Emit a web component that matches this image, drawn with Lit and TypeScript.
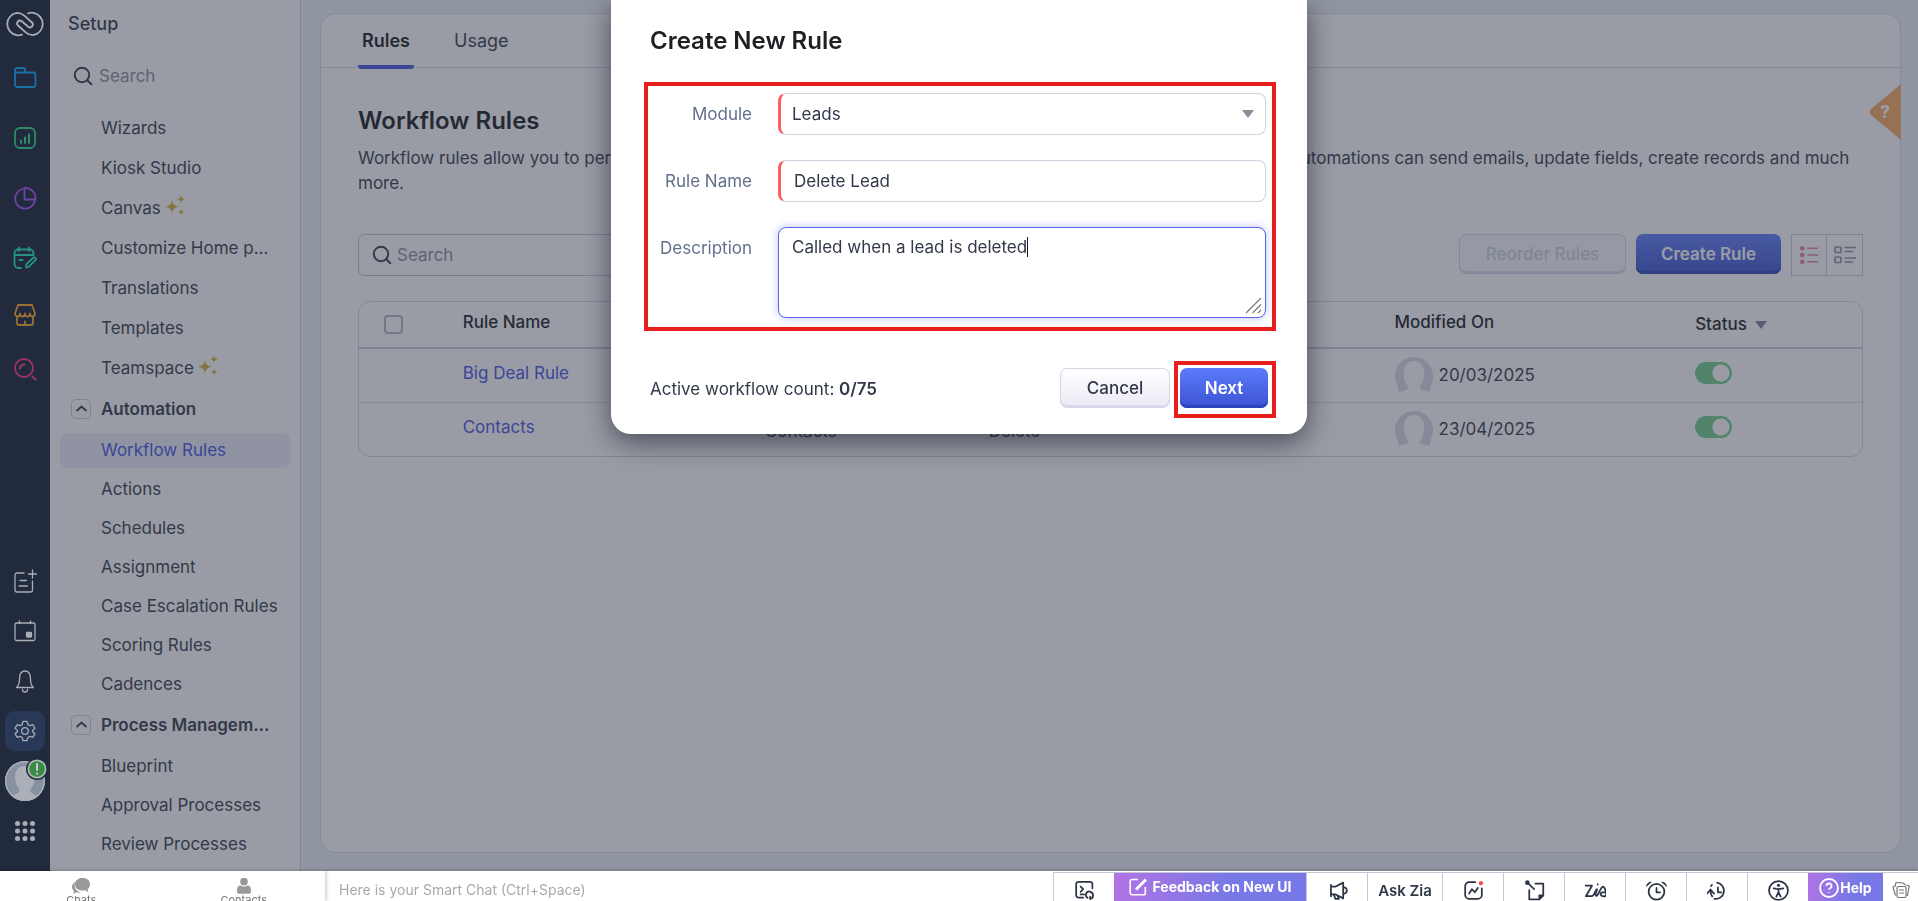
import { LitElement, html, css, svg, type TemplateResult } from "lit";
import { customElement, state } from "lit/decorators.js";
import { classMap } from "lit/directives/class-map.js";

const searchIcon = html`<svg class="i-search" width="20" height="20" viewBox="0 0 20 20" aria-hidden="true">
  <circle cx="9" cy="9" r="7.2" /><path d="M14.2 14.2 18.3 18.3" />
</svg>`;

const sparkle = html`<svg class="spark" width="20" height="22" viewBox="0 0 20 22" aria-hidden="true">
  <path d="M7 5c.9 4.400 2.200 5.700 6.800 6.700C9.200 12.700 7.900 14 7 18.400 6.100 14 4.800 12.700.2 11.700 4.800 10.700 6.100 9.400 7 5Z" />
  <path d="M16 .3c.6 2.400 1.400 3.300 3.900 3.900-2.500.6-3.300 1.500-3.900 3.900-.6-2.400-1.400-3.300-3.900-3.900 2.500-.6 3.300-1.500 3.900-3.900Z" />
  <path d="M16.200 13.800c.5 2.100 1.200 2.800 3.300 3.300-2.100.5-2.800 1.200-3.300 3.400-.5-2.200-1.200-2.900-3.300-3.400 2.100-.5 2.800-1.200 3.300-3.300Z" />
</svg>`;

const person = svg`<circle cx="20" cy="20" r="20" fill="#8891a1" />
  <path d="M20 5c6.500 0 10 4.500 10 11 0 5-2 9.500-4.500 12-.8 3 .5 4 4 5.500l3 1.500A20 20 0 0 1 7 35l3-1.500c3.500-1.500 4.800-2.500 4-5.500C11.500 25.500 10 21 10 16 10 9.500 13.500 5 20 5Z" fill="#aaafb8" />
  <circle cx="20" cy="20" r="19.300" fill="none" stroke="#aaafb8" stroke-width="1.400" />`;

const rowAvatar = html`<svg class="row-avatar" width="38" height="36" viewBox="0 0 38 36" aria-hidden="true">
  <path fill-rule="evenodd" d="M19 0A19 19 0 0 1 36 27.500L34.500 35l-8.500-2.500c-2-1.500-1-3.500.3-5 2-2.500 3-7 3-11.500C29.300 8.500 25.500 4 19 4S8.700 8.500 8.700 16c0 4.500 1 9 3 11.500 1.300 1.500 2.300 3.500.3 5L4 35 2 27.500A19 19 0 0 1 19 0Z" />
</svg>`;

const railTop: [string, string, TemplateResult][] = [
  ["Modules", "#1a72ab", svg`<path d="M2 19V4.500A2.500 2.500 0 0 1 4.500 2H10a2 2 0 0 1 2 2v1.500M2 6.500h18a2.500 2.500 0 0 1 2.500 2.500v9.500A2.500 2.500 0 0 1 20 21H4.500A2.500 2.500 0 0 1 2 18.500" />`],
  ["Reports", "#2e8a68", svg`<rect x="2" y="2" width="20" height="20" rx="5" /><path stroke-width="2" d="M8 14.500V17M12 11.500V17M16 8.500V17" />`],
  ["Analytics", "#6f42a6", svg`<path d="M9.500 3A10 10 0 1 0 22 14.500M11.500 1.800V13.500H22.500A10.500 10.500 0 0 0 11.500 1.800M22 14.500l.4-2" />`],
  ["Activities", "#269184", svg`<path d="M8 22H5.500A4 4 0 0 1 1.500 18V7A3.500 3.500 0 0 1 5 3.500h12A3.500 3.500 0 0 1 20.500 7v2M1.500 9h19M6 1.500V5M16 1.500V5M6.500 14h3M13 21.500l.6-3.500 6.500-6.200a1.500 1.500 0 0 1 2.300 2.300L16 20.700Z" />`],
  ["Marketplace", "#9a6f35", svg`<path d="M5 2h14l3 8.500c0 4-5 4-5 0 0 4-5 4-5 0 0 4-5 4-5 0 0 4-5 4-5 0ZM4 13.500V20a2 2 0 0 0 2 2h12a2 2 0 0 0 2-2v-6.500M12 18.500V22" />`],
  ["Zia", "#9b3565", svg`<circle cx="11" cy="11" r="9" /><path d="M7 11.500A4.500 4.500 0 0 1 11.500 7.500M19.500 19.500l3 3" stroke-width="2.200" />`],
];

const railBottom: [string, TemplateResult][] = [
  ["Create", svg`<path d="M11 4H4a2 2 0 0 0-2 2v15a2 2 0 0 0 2 2h13.500a2 2 0 0 0 2-2v-9M7 11.500h6.500M6 17h8.500M19.500 1v8M15.500 5h8" />`],
  ["Calendar", svg`<rect x="2" y="4" width="20" height="17.500" rx="1.500" /><path d="M6.500 2v2.500M17.500 2v2.500" /><rect x="13.500" y="13.500" width="5" height="4.500" rx=".8" fill="#a9adb5" />`],
  ["Notifications", svg`<path d="M3.500 18.500c2.500-2 3-4.500 3-8.500C6.500 5.500 8 2 12 2s5.500 3.500 5.500 8c0 4 .5 6.500 3 8.500ZM9.500 20.500a2.500 2.500 0 0 0 5 0" />`],
];

const firstItems: [string, boolean][] = [
  ["Wizards", false], ["Kiosk Studio", false], ["Canvas", true], ["Customize Home p...", false],
  ["Translations", false], ["Templates", false], ["Teamspace", true],
];

const groups = [
  { title: "Automation", items: ["Workflow Rules", "Actions", "Schedules", "Assignment", "Case Escalation Rules", "Scoring Rules", "Cadences"] },
  { title: "Process Managem...", items: ["Blueprint", "Approval Processes", "Review Processes"] },
];

const rules = [
  { name: "Big Deal Rule", module: "Deals", on: "Edit", date: "20/03/2025" },
  { name: "Contacts", module: "Contacts", on: "Delete", date: "23/04/2025" },
];

const toolIcons: Record<string, TemplateResult> = {
  code: svg`<path d="M10.500 20H5A2.500 2.500 0 0 1 2.500 17.500v-13A2.500 2.500 0 0 1 5 2h13.500A2.500 2.500 0 0 1 21 4.500V9.500M7.500 7.500l3 3-3 3M7.500 16.500h4" /><path d="M17.500 13a4 4 0 0 0-2 7.400M18.500 13.500a4.200 4.200 0 0 1 0 8.200V19" />`,
  horn: svg`<path d="M4.500 7.500h5.500l8.500-4.500v18L10 16.500H4.500M4.500 5.500v13M8 17l1.500 4.500h4L12 17.800M20 8.500c3.500 1 3.500 6 0 7" />`,
  graph: svg`<path d="M14 2.500H7A4.500 4.500 0 0 0 2.500 7v10A4.500 4.500 0 0 0 7 21.500H17a4.500 4.500 0 0 0 4.500-4.500V9.500M7 15.500l3.200-5 3.300 3.500 3.500-5" /><circle cx="20.500" cy="3.500" r="2.500" fill="#fb4b42" stroke="none" />`,
  note: svg`<path d="M13 4h9v13.500L17.500 22H6V11.500M5.500 4.500l6 6" /><path d="M22 17.500h-4.500V22Z" fill="#2c3445" /><circle cx="3.800" cy="3" r="2.600" fill="#2c3445" stroke="none" />`,
  zia: svg`<path d="M0 6.500h8L1 18.500h6.500c3.500 0 4.500-8 6-8s-2.800 5.500-1 7.500c2 2 5.500-10.500 8-10.500 2 0 4 6.500 3.500 9.500-.3 2.300-4 2-5.500.5-1.500-1.500-.5-3.500 2-3.500h3M14.500 4.800v.2" />`,
  alarm: svg`<circle cx="12" cy="13.500" r="9" /><path d="M12 9v5h4" /><path d="M0 8A6 6 0 0 1 7 2ZM24 8A6 6 0 0 0 17 2Z" fill="#2c3445" stroke="none" />`,
  history: svg`<path d="M8.500 21.500A9.300 9.300 0 1 0 11.500 3M12.500 8.500V14h4" /><path d="M.2 15.500 4 10.800l4 4.700M4 12.500c0 3 .8 4.800 2 6.200" /><path d="M4.500 7a9 9 0 0 1 1.200-1.500" />`,
  access: svg`<circle cx="12" cy="12" r="10.800" /><circle cx="12" cy="6" r="1.800" fill="#2c3445" stroke="none" /><path d="M6.500 9.500 12 10.500l5.500-1M12 10.500v4M12 14l-2.500 5M12 14l2.500 5" />`,
};

const tool = (name: string) => html`<svg class="tool-icon" width="21" height="21" viewBox="0 0 24 24" aria-hidden="true">${toolIcons[name]}</svg>`;

@customElement("app-root")
export class AppRoot extends LitElement {
  @state() private description = "Called when a lead is deleted";

  static styles = css`
    :host {
      display: block;
      height: 100vh;
      font: 17px/25px Inter, Roboto, sans-serif;
      color: #313949;
      overflow: hidden;
    }
    * { box-sizing: border-box; }
    button, input, select, textarea { font: inherit; color: inherit; margin: 0; }
    button { border: 0; background: none; padding: 0; }
    a { color: inherit; text-decoration: none; }
    ul { list-style: none; margin: 0; padding: 0; }
    h1, h2, p { margin: 0; }

    .page { display: flex; flex-direction: column; height: 100%; }
    .body { flex: 1; min-height: 0; display: flex; }

    .rail {
      position: relative;
      z-index: 2;
      width: 50px;
      flex: none;
      display: flex;
      flex-direction: column;
      justify-content: space-between;
      background: #222b3d;
      padding-bottom: 15px;
    }
    .rail svg { display: block; fill: none; stroke-linecap: round; stroke-linejoin: round; }
    .rail-part { display: flex; flex-direction: column; align-items: center; }
    .logo { height: 48px; display: flex; align-items: center; }
    .rail-btn { width: 40px; height: 60px; display: flex; align-items: center; justify-content: center; }
    .rail-btn.tight { height: 54px; }
    .rail-cell { height: 50px; display: flex; align-items: center; justify-content: center; position: relative; }
    .rail-cell button { width: 40px; height: 40px; display: flex; align-items: center; justify-content: center; border-radius: 10px; }
    .rail-cell .current { background: #293856; }
    .badge { position: absolute; top: 2px; right: -3px; }

    .side { width: 251px; flex: none; background: #fff; border-right: 1px solid #ccd0e2; overflow: hidden; }
    .side-title { font-size: 18px; line-height: 24px; font-weight: 500; padding: 12px 18px; }
    .side-search { display: flex; align-items: center; gap: 6px; padding: 0 23px; height: 56px; margin-bottom: 4px; }
    .side-search input, .search input { border: 0; outline: 0; background: none; padding: 0; width: 100%; min-width: 0; }
    ::placeholder { color: #868c9e; opacity: 1; }
    .i-search { flex: none; fill: none; stroke: #313949; stroke-width: 2; stroke-linecap: round; }
    .menu li { padding: 2px 10px; }
    .menu a { display: flex; align-items: center; gap: 4px; height: 36px; padding-left: 41px; border-radius: 8px; white-space: nowrap; }
    .menu.inner { padding-top: 1px; }
    .menu.inner a { height: 35px; }
    .menu a.active { background: #eceffa; color: #4450e6; }
    .spark { fill: #d4b236; margin-bottom: 5px; }
    .group { display: flex; align-items: center; gap: 10px; height: 42px; width: 100%; padding-left: 21px; font-weight: 600; white-space: nowrap; }
    .group svg { flex: none; fill: none; }

    .main { flex: 1; min-width: 0; background: #edf0fa; padding: 13px 17px 18px 19px; display: flex; }
    .panel { position: relative; flex: 1; min-width: 0; background: #fff; border: 1px solid #d5dae8; border-radius: 16px; }
    .tabs { display: flex; gap: 31px; height: 54px; padding-left: 37px; border-bottom: 1px solid #d5d9e6; font-size: 18px; }
    .tabs a { padding: 0 4px; height: 55px; line-height: 54px; }
    .tabs a + a { padding: 0 9px; }
    .tabs .on { font-weight: 600; color: #16181f; border-bottom: 4px solid #4450e6; border-radius: 3px; }
    .content { padding: 36px 37px 0; }
    .content h1 { font-size: 24px; line-height: 34px; font-weight: 600; color: #16181f; }
    .lead { padding-top: 8px; }
    .bar { display: flex; gap: 10px; margin: 38px 0 25px; height: 42px; align-items: flex-start; }
    .search { display: flex; align-items: center; gap: 5px; width: 380px; height: 42px; padding: 0 13px; border: 1px solid #c0c5d4; border-radius: 6px; margin-right: auto; }

    .btn { height: 40px; border-radius: 7px; font-weight: 500; white-space: nowrap; }
    .btn.primary { color: #fff; font-weight: 600; background: linear-gradient(#5c7bfb, #3b53d2); box-shadow: inset 0 -3px 0 #2e44bc; }
    .btn.plain { border: 1px solid #d3d4e4; background: linear-gradient(#fff, #ebe9f4); box-shadow: inset 0 -2px 0 #d9dbec; }
    .btn.reorder { width: 167px; background: #f7f8fc; color: #cdd0e3; }
    .create { width: 145px; }
    .views { display: flex; height: 42px; border: 1px solid #c6cad9; }
    .views button { width: 34px; display: flex; align-items: center; justify-content: center; }
    .views button + button { width: 36px; border-left: 1px solid #c6cad9; }

    .table-box { border: 1px solid #d0d6e4; border-radius: 12px; overflow: hidden; }
    table { width: 100%; table-layout: fixed; border-collapse: collapse; }
    th, td { padding: 0; text-align: left; vertical-align: middle; white-space: nowrap; }
    th { height: 46px; font-weight: 500; color: #16181f; border-bottom: 2px solid #c6cedd; padding-bottom: 4px; }
    td { height: 54px; }
    td.low { padding-top: 4px; }
    tr + tr td { border-top: 1px solid #d9dde8; }
    .c-check { width: 6.9%; }
    .c-name { width: 20.1%; }
    .c-module { width: 14.9%; }
    .c-on { width: 27%; }
    .c-date { width: 20%; }
    .tick { appearance: none; display: block; width: 19px; height: 19px; margin: 4px 0 0 25px; border: 2px solid #b2b6c8; border-radius: 4px; }
    .status-head { display: flex; align-items: center; gap: 8px; padding-top: 4px; }
    td a { color: #4450e6; display: block; padding-bottom: 4px; }
    .date { display: flex; align-items: center; gap: 6px; }
    .row-avatar { fill: #d5dae5; flex: none; }
    .switch { appearance: none; display: block; width: 37px; height: 22px; margin: 0 0 4px; border-radius: 11px; background: radial-gradient(circle at 26px 50%, #fff 8px, #70cf8c 9px); }

    .ask { position: absolute; right: -1px; top: 70px; width: 32px; height: 56px; }
    .ask svg { display: block; }

    .backdrop { position: fixed; inset: 0; z-index: 1; background: rgba(51, 57, 73, 0.5); }

    dialog {
      position: fixed;
      z-index: 3;
      inset: 0 0 auto;
      margin: 0 auto;
      width: 696px;
      max-width: 100%;
      border: 0;
      padding: 24px 31px 16px 33px;
      border-radius: 0 0 20px 20px;
      background: #fff;
      color: #313949;
      box-shadow: 0 8px 28px rgba(20, 24, 40, 0.6);
    }
    dialog h2 { font-size: 24px; line-height: 34px; font-weight: 600; color: #1f2024; padding-left: 6px; }
    .mark { border: 4px solid #e81e1e; }
    .fields { display: grid; grid-template-columns: 104px 1fr; column-gap: 26px; row-gap: 25px; margin-top: 24px; padding: 7px 6px 9px 0; }
    .fields label { text-align: right; line-height: 42px; color: #63708c; }
    .pick { position: relative; }
    .pick svg { position: absolute; right: 12px; top: 17px; pointer-events: none; }
    .field { display: block; width: 100%; height: 42px; border: 1px solid #cfd1df; border-radius: 8px; padding: 0 13px; background: #fff; outline: 0; }
    .need { border-left: 3px solid #ff5c5c; }
    select.field { appearance: none; padding-left: 11px; }
    textarea.field { height: 91px; padding: 7px 13px; resize: none; border-color: #5565e8; box-shadow: 0 0 8px rgba(85, 101, 232, 0.4); }
    .area { position: relative; }
    .area svg { position: absolute; right: 4px; bottom: 4px; pointer-events: none; }
    .caret { position: absolute; left: 249px; top: 10px; width: 1px; height: 20px; background: #16181f; }
    .foot { display: flex; align-items: center; gap: 4px; padding-top: 30px; }
    .foot p { flex: 1; padding-left: 6px; }
    .foot b { font-weight: 600; }
    .cancel { width: 110px; margin-bottom: 3px; }
    .next-mark { padding: 3px 4px 6px 2px; }
    .next { display: block; width: 88px; }

    .chatbar { position: relative; z-index: 2; height: 30px; flex: none; display: flex; background: #fff; overflow: hidden; box-shadow: 0 -1px 3px rgba(0, 0, 0, 0.2); }
    .chat-tabs { position: relative; z-index: 1; display: flex; width: 325px; background: #fff; box-shadow: 1px 0 4px rgba(0, 0, 0, 0.25); }
    .chat-tabs button { flex: 1; display: flex; flex-direction: column; align-items: center; justify-content: flex-start; padding-top: 7px; font-size: 11px; line-height: 12px; color: #777; }
    .chat-tabs svg { flex: none; fill: #999; }
    .chat-input { flex: 1; min-width: 0; border: 0; outline: 0; padding: 8px 14px 0; font-size: 14px; line-height: 22px; background: none; }
    .chat-input::placeholder { color: #a9a9a9; }
    .tools { display: flex; margin-top: 1px; border-top: 1px solid #c5c6d6; }
    .tools button { width: 61px; border-left: 1px solid #c5c6d6; display: flex; align-items: center; justify-content: center; padding-top: 6px; font-weight: 600; font-size: 15px; line-height: 20px; white-space: nowrap; }
    .tools svg { flex: none; display: block; }
    .tool-icon { fill: none; stroke: #2c3445; stroke-width: 2; stroke-linecap: round; stroke-linejoin: round; }
    .tools .zia-ask { width: 75px; padding-top: 8px; }
    .tools .grad { border: 0; color: #fff; font-weight: 700; background: linear-gradient(100deg, #b273e4, #7878e6 60%); }
    .tools .feedback { width: 192px; gap: 6px; font-size: 14px; padding-top: 0; }
    .tools .help { width: 75px; gap: 1px; font-size: 14px; padding-top: 2px; }
    .tools .cards { width: 35px; border: 0; }
  `;

  private onDescription(e: Event) {
    this.description = (e.target as HTMLTextAreaElement).value;
  }

  private renderRail() {
    return html`<nav class="rail" aria-label="Main">
      <div class="rail-part">
        <a class="logo" href="#" aria-label="Home">
          <svg width="40" height="26" viewBox="5 11 40 26" stroke="#a9adb5" stroke-width="1.800">
            <path d="M22 34.700C20.500 35.200 17.500 35.300 16.500 35.100A11.300 11.300 0 0 1 17 12.800c3 0 5 1 7 2.600l8 7.100c2.500 2.500-.8 6.500-3.800 4.200L21.800 21.300c-3-2.300-6.300 1.700-3.800 4.200l8 7.100c2 1.600 4 2.600 7 2.600A11.300 11.300 0 0 0 33.500 12.900C32.500 12.700 29.500 12.800 28 13.300" />
          </svg>
        </a>
        ${railTop.map(([label, color, shape], i) => html`<button class=${classMap({ "rail-btn": true, tight: i > 3 })} aria-label=${label}>
          <svg width="24" height="24" viewBox="0 0 24 24" stroke=${color} stroke-width="1.800">${shape}</svg>
        </button>`)}
      </div>
      <div class="rail-part">
        ${railBottom.map(([label, shape]) => html`<div class="rail-cell"><button aria-label=${label}>
          <svg width="24" height="24" viewBox="0 0 24 24" stroke="#a9adb5" stroke-width="1.300">${shape}</svg>
        </button></div>`)}
        <div class="rail-cell"><button class="current" aria-label="Setup">
          <svg width="24" height="24" viewBox="0 0 24 24" stroke="#a9adb5" stroke-width="1.300">
            <circle cx="12" cy="12" r="3.300" />
            <path d="M10 2.300h4l.8 3.200 2 1.200 3.100-1 2 3.500-2.300 2.200v1.300l2.300 2.100-2 3.500-3.100-1-2 1.200-.8 3.200h-4l-.8-3.200-2-1.200-3.100 1-2-3.500 2.300-2.100v-1.300L2.100 9.200l2-3.500 3.100 1 2-1.200Z" />
          </svg>
        </button></div>
        <div class="rail-cell"><button aria-label="Profile">
          <svg width="40" height="40" viewBox="0 0 40 40">${person}</svg>
          <svg class="badge" width="22" height="22" viewBox="0 0 22 22">
            <circle cx="11" cy="11" r="11" fill="#222b3d" /><circle cx="11" cy="11" r="9.500" fill="#a9bdae" /><circle cx="11" cy="11" r="7.800" fill="#3c8a48" />
            <path d="M11 6v6M11 15.500v.2" stroke="#c6cdd0" stroke-width="2" />
          </svg>
        </button></div>
        <div class="rail-cell"><button aria-label="Apps">
          <svg width="20" height="20" viewBox="0 0 20 20">${[2.5, 10, 17.5].map(y => [2.5, 10, 17.5].map(x => svg`<circle cx=${x} cy=${y} r="2.500" fill="#a9adb5" />`))}</svg>
        </button></div>
      </div>
    </nav>`;
  }

  private renderSide() {
    return html`<aside class="side">
      <div class="side-title">Setup</div>
      <label class="side-search">${searchIcon}<input type="text" placeholder="Search" aria-label="Search setup" /></label>
      <ul class="menu">${firstItems.map(([t, star]) => html`<li><a href="#">${t}${star ? sparkle : ""}</a></li>`)}</ul>
      ${groups.map(g => html`<button class="group">
          <svg width="20" height="20" viewBox="0 0 20 20"><rect x=".5" y=".5" width="19" height="19" rx="4" stroke="#c8ccda" /><path d="m5.500 12 5-4.500 5 4.500" stroke="#313949" stroke-width="1.800" /></svg>
          ${g.title}
        </button>
        <ul class="menu inner">${g.items.map(t => html`<li><a href="#" class=${classMap({ active: t === "Workflow Rules" })}>${t}</a></li>`)}</ul>`)}
    </aside>`;
  }

  private renderMain() {
    return html`<main class="main"><section class="panel">
      <nav class="tabs"><a class="on" href="#">Rules</a><a href="#">Usage</a></nav>
      <div class="content">
        <h1>Workflow Rules</h1>
        <p class="lead">Workflow rules allow you to perform certain automatic actions on specific records based on the filter criteria. These automations can send emails, update fields, create records and much more.</p>
        <div class="bar">
          <label class="search">${searchIcon}<input type="text" placeholder="Search" aria-label="Search rules" /></label>
          <button class="btn plain reorder" disabled>Reorder Rules</button>
          <button class="btn primary create">Create Rule</button>
          <div class="views">
            <button aria-label="List view"><svg width="18" height="20" viewBox="0 0 20 20" fill="#e8848c"><circle cx="2.500" cy="2.500" r="2.500" /><circle cx="2.500" cy="10" r="2.500" /><circle cx="2.500" cy="17.500" r="2.500" /><path d="M8 1.600h12v1.800H8zM8 9.100h12v1.800H8zM8 16.600h12v1.800H8z" /></svg></button>
            <button aria-label="Detail view"><svg width="22" height="18" viewBox="0 0 22 18" fill="none" stroke="#8a91a2" stroke-width="1.700"><rect x="1" y="1" width="6" height="5.500" rx="1" /><rect x="1" y="11" width="6" height="5.500" rx="1" /><path d="M10.500 1.500H22M10.500 5.500H19M10.500 12H22M10.500 16H19" /></svg></button>
          </div>
        </div>
        <div class="table-box"><table>
          <thead><tr>
            <th class="c-check"><input class="tick" type="checkbox" aria-label="Select all" /></th>
            <th class="c-name">Rule Name</th><th class="c-module">Module</th><th class="c-on">Execute On</th><th class="c-date">Modified On</th>
            <th><span class="status-head">Status <svg width="12" height="8" viewBox="0 0 12 8"><path d="M0 0h12L6 8Z" fill="#7d8496" /></svg></span></th>
          </tr></thead>
          <tbody>${rules.map(r => html`<tr>
            <td></td><td><a href="#">${r.name}</a></td><td class="low">${r.module}</td><td class="low">${r.on}</td>
            <td><span class="date">${rowAvatar}${r.date}</span></td>
            <td><input class="switch" type="checkbox" role="switch" checked aria-label="${r.name} status" /></td>
          </tr>`)}</tbody>
        </table></div>
      </div>
      <button class="ask" aria-label="Help"><svg width="32" height="56" viewBox="0 0 32 56"><path d="M32 0v56L2 31q-3-3 0-6Z" fill="#fba963" /><text x="16" y="34" text-anchor="middle" font-size="18" font-weight="700" fill="#fff">?</text></svg></button>
    </section></main>`;
  }

  private renderDialog() {
    return html`<dialog open aria-labelledby="dlg-title">
      <h2 id="dlg-title">Create New Rule</h2>
      <div class="fields mark">
        <label for="module">Module</label>
        <div class="pick">
          <select id="module" class="field need"><option>Leads</option><option>Contacts</option><option>Deals</option></select>
          <svg width="12" height="8" viewBox="0 0 12 8"><path d="M0 0h12L6 8Z" fill="#868c9c" /></svg>
        </div>
        <label for="name">Rule Name</label>
        <input id="name" class="field need" type="text" .value=${"Delete Lead"} />
        <label for="desc">Description</label>
        <div class="area">
          <textarea id="desc" class="field" .value=${this.description} @input=${this.onDescription}></textarea>
          <span class="caret"></span>
          <svg width="17" height="17" viewBox="0 0 17 17" stroke="#777" stroke-width="1.200"><path d="M1 16 16 1M7.500 16 16 7.500M13 16l3-3" /></svg>
        </div>
      </div>
      <div class="foot">
        <p>Active workflow count: <b>0/75</b></p>
        <button class="btn plain cancel">Cancel</button>
        <div class="mark next-mark"><button class="btn primary next">Next</button></div>
      </div>
    </dialog>`;
  }

  private renderChatbar() {
    return html`<footer class="chatbar">
      <div class="chat-tabs">
        <button><svg width="18" height="16" viewBox="0 0 18 16"><path d="M10.500 0c4.500 0 7.500 2.500 7.500 6.200 0 2.300-1 4-2.500 5l.8 3-3.300-2c-.8.2-1.600.3-2.500.3C6 12.500 3 10 3 6.200 3 2.500 6 0 10.500 0Z" /><path d="M3 4C1 5.200 0 7 0 9c0 1.800.8 3 2 4l-.5 3 3-1.700c1.500.4 3 .3 4-.3C4.500 13.500 1.500 9.500 3 4Z" /></svg>Chats</button>
        <button><svg width="14" height="16" viewBox="0 0 14 16"><ellipse cx="7" cy="3.600" rx="3.800" ry="3.900" /><path d="M3.200 7.300c2 1.600 5.600 1.600 7.600 0C13 8 14 9.500 14 12v2a1.800 1.800 0 0 1-1.800 1.800H1.800A1.800 1.800 0 0 1 0 14v-2c0-2.500 1-4 3.200-4.700Z" /></svg>Contacts</button>
      </div>
      <input class="chat-input" type="text" placeholder="Here is your Smart Chat (Ctrl+Space)" aria-label="Smart Chat" />
      <div class="tools">
        <button aria-label="Developer tools">${tool("code")}</button>
        <button class="grad feedback"><svg width="18" height="18" viewBox="0 0 18 18" fill="none" stroke="#fff" stroke-width="1.600"><path d="M9 1.500H3A1.800 1.800 0 0 0 1.200 3.300V15A1.800 1.800 0 0 0 3 16.800h11.500A1.800 1.800 0 0 0 16.300 15V9" /><path d="M7 11.500 17 1.500" stroke-width="3" /></svg>Feedback on New UI</button>
        <button aria-label="Announcements">${tool("horn")}</button>
        <button class="zia-ask">Ask Zia</button>
        <button aria-label="Trends">${tool("graph")}</button>
        <button aria-label="Sticky notes">${tool("note")}</button>
        <button aria-label="Zia">${tool("zia")}</button>
        <button aria-label="Reminders">${tool("alarm")}</button>
        <button aria-label="Recent items">${tool("history")}</button>
        <button aria-label="Accessibility">${tool("access")}</button>
        <button class="grad help"><svg width="20" height="20" viewBox="0 0 20 20" fill="none" stroke="#fff" stroke-width="1.800"><circle cx="10" cy="10" r="9" /><path d="M7.500 8a2.500 2.500 0 1 1 3.600 2.200c-.8.400-1.100.8-1.100 1.600M10 14v.8" /></svg>Help</button>
        <button class="cards" aria-label="Cards"><svg width="18" height="18" viewBox="0 0 18 18" fill="none" stroke="#777" stroke-width="1.200"><rect x="5" y="5.500" width="9" height="11" rx="1.500" /><path d="M3.500 14.500 1 6l3-1.500M14.500 14.500h1L17.200 5l-3-1M3.500 4.500V3A1.500 1.500 0 0 1 5 1.500l6 .5 2.500 2M7 9h5M7 12h5" /></svg></button>
      </div>
    </footer>`;
  }

  render() {
    return html`<div class="page">
      <div class="body">${this.renderRail()}${this.renderSide()}${this.renderMain()}</div>
      ${this.renderChatbar()}
    </div>
    <div class="backdrop"></div>
    ${this.renderDialog()}`;
  }
}
